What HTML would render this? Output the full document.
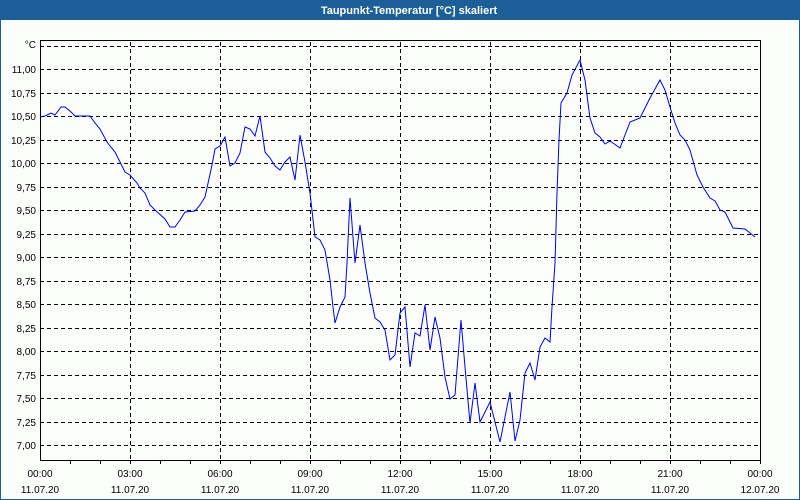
<!DOCTYPE html>
<html><head><meta charset="utf-8"><style>
html,body{margin:0;padding:0;width:800px;height:500px;overflow:hidden;background:#fcfefc;}
</style></head><body>
<svg width="800" height="500" xmlns="http://www.w3.org/2000/svg" style="display:block;font-family:'Liberation Sans',sans-serif;">
<rect x="0" y="0" width="800" height="500" fill="#fcfefc"/>
<rect x="0.5" y="0.5" width="799" height="499" fill="none" stroke="#1c5f98" stroke-width="1"/>
<rect x="0" y="0" width="800" height="20" fill="#1c5f98"/>
<text x="409" y="14" font-size="11" font-weight="bold" fill="#fff" text-anchor="middle">Taupunkt-Temperatur [°C] skaliert</text>
<g stroke="#000" stroke-width="1" stroke-dasharray="4,3" fill="none">
<line x1="40" x2="758" y1="46.5" y2="46.5"/>
<line x1="40" x2="758" y1="69.5" y2="69.5"/>
<line x1="40" x2="758" y1="93.5" y2="93.5"/>
<line x1="40" x2="758" y1="116.5" y2="116.5"/>
<line x1="40" x2="758" y1="140.5" y2="140.5"/>
<line x1="40" x2="758" y1="163.5" y2="163.5"/>
<line x1="40" x2="758" y1="187.5" y2="187.5"/>
<line x1="40" x2="758" y1="210.5" y2="210.5"/>
<line x1="40" x2="758" y1="234.5" y2="234.5"/>
<line x1="40" x2="758" y1="257.5" y2="257.5"/>
<line x1="40" x2="758" y1="281.5" y2="281.5"/>
<line x1="40" x2="758" y1="304.5" y2="304.5"/>
<line x1="40" x2="758" y1="328.5" y2="328.5"/>
<line x1="40" x2="758" y1="351.5" y2="351.5"/>
<line x1="40" x2="758" y1="375.5" y2="375.5"/>
<line x1="40" x2="758" y1="398.5" y2="398.5"/>
<line x1="40" x2="758" y1="422.5" y2="422.5"/>
<line x1="40" x2="758" y1="445.5" y2="445.5"/>
<line x1="130.5" x2="130.5" y1="42" y2="460"/>
<line x1="220.5" x2="220.5" y1="42" y2="460"/>
<line x1="310.5" x2="310.5" y1="42" y2="460"/>
<line x1="400.5" x2="400.5" y1="42" y2="460"/>
<line x1="490.5" x2="490.5" y1="42" y2="460"/>
<line x1="580.5" x2="580.5" y1="42" y2="460"/>
<line x1="670.5" x2="670.5" y1="42" y2="460"/>
</g>
<rect x="40.5" y="40.5" width="720" height="420" fill="none" stroke="#000" stroke-width="1"/>
<g stroke="#000" stroke-width="1">
<line x1="70.5" x2="70.5" y1="460" y2="464"/><line x1="100.5" x2="100.5" y1="460" y2="464"/><line x1="130.5" x2="130.5" y1="460" y2="464"/>
<line x1="160.5" x2="160.5" y1="460" y2="464"/><line x1="190.5" x2="190.5" y1="460" y2="464"/><line x1="220.5" x2="220.5" y1="460" y2="464"/>
<line x1="250.5" x2="250.5" y1="460" y2="464"/><line x1="280.5" x2="280.5" y1="460" y2="464"/><line x1="310.5" x2="310.5" y1="460" y2="464"/>
<line x1="340.5" x2="340.5" y1="460" y2="464"/><line x1="370.5" x2="370.5" y1="460" y2="464"/><line x1="400.5" x2="400.5" y1="460" y2="464"/>
<line x1="430.5" x2="430.5" y1="460" y2="464"/><line x1="460.5" x2="460.5" y1="460" y2="464"/><line x1="490.5" x2="490.5" y1="460" y2="464"/>
<line x1="520.5" x2="520.5" y1="460" y2="464"/><line x1="550.5" x2="550.5" y1="460" y2="464"/><line x1="580.5" x2="580.5" y1="460" y2="464"/>
<line x1="610.5" x2="610.5" y1="460" y2="464"/><line x1="640.5" x2="640.5" y1="460" y2="464"/><line x1="670.5" x2="670.5" y1="460" y2="464"/>
<line x1="700.5" x2="700.5" y1="460" y2="464"/><line x1="730.5" x2="730.5" y1="460" y2="464"/><line x1="760.5" x2="760.5" y1="460" y2="464"/>
</g>
<g font-size="10" fill="#000" text-anchor="end">
<text x="36" y="48">°C</text>
<text x="36" y="73">11,00</text><text x="36" y="97">10,75</text><text x="36" y="120">10,50</text><text x="36" y="144">10,25</text>
<text x="36" y="167">10,00</text><text x="36" y="191">9,75</text><text x="36" y="214">9,50</text><text x="36" y="238">9,25</text>
<text x="36" y="261">9,00</text><text x="36" y="285">8,75</text><text x="36" y="308">8,50</text><text x="36" y="332">8,25</text>
<text x="36" y="355">8,00</text><text x="36" y="379">7,75</text><text x="36" y="402">7,50</text><text x="36" y="426">7,25</text>
<text x="36" y="449">7,00</text>
</g>
<g font-size="10" fill="#000" text-anchor="middle">
<text x="40" y="477">00:00</text><text x="40" y="493">11.07.20</text>
<text x="130" y="477">03:00</text><text x="130" y="493">11.07.20</text>
<text x="220" y="477">06:00</text><text x="220" y="493">11.07.20</text>
<text x="310" y="477">09:00</text><text x="310" y="493">11.07.20</text>
<text x="400" y="477">12:00</text><text x="400" y="493">11.07.20</text>
<text x="490" y="477">15:00</text><text x="490" y="493">11.07.20</text>
<text x="580" y="477">18:00</text><text x="580" y="493">11.07.20</text>
<text x="670" y="477">21:00</text><text x="670" y="493">11.07.20</text>
<text x="760" y="477">00:00</text><text x="760" y="493">12.07.20</text>
</g>
<polyline fill="none" stroke="#0000ee" stroke-width="1" points="40,117 45,116 51,113 55,115 61,107 65,107 70,111 75,116 90,116 95,123 100,129 107,142 110,146 115,152 120,162 125,172 130,175 137,183 140,188 145,193 150,205 155,210 165,219 170,227 175,227 180,220 185,212 195,211 200,205 205,197 207,188 212,165 215,149 220,146 225,137 230,166 235,163 240,153 245,127 250,129 255,136 260,116 265,152 270,158 275,166 280,170 285,162 290,157 295,180 300,135 305,162 310,193 315,237 320,240 325,250 330,280 333,307 335,323 340,307 345,297 347,263 350,198 355,263 360,225 365,263 370,293 375,318 380,322 385,330 390,360 395,355 400,313 405,307 410,367 415,333 420,336 425,305 430,350 435,317 440,338 445,377 450,399 455,395 461,320 465,367 470,423 475,383 480,422 490,402 500,442 510,392 515,441 520,420 525,373 530,363 535,380 540,347 545,338 550,342 552,307 555,263 557,193 559,140 561,103 567,93 572,75 580,60 585,80 590,118 595,133 600,137 605,144 610,141 620,148 625,135 630,122 640,118 650,98 660,80 665,90 670,107 675,123 680,135 685,140 690,150 697,175 703,187 710,198 715,201 720,210 725,212 733,228 745,229 755,237"/>
</svg>
</body></html>
